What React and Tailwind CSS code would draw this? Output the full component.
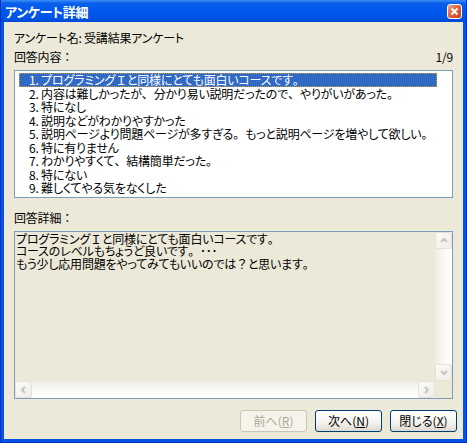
import React from 'react';

const items = [
    'プログラミングＩと同様にとても面白いコースです。',
    '内容は難しかったが、分かり易い説明だったので、やりがいがあった。',
    '特になし',
    '説明などがわかりやすかった',
    '説明ページより問題ページが多すぎる。もっと説明ページを増やして欲しい。',
    '特に有りません',
    'わかりやすくて、結構簡単だった。',
    '特にない',
    '難しくてやる気をなくした',
];

const detailLines = [
    'プログラミングＩと同様にとても面白いコースです。',
    'コースのレベルもちょうど良いです。･･･',
    'もう少し応用問題をやってみてもいいのでは？と思います。',
];

// 全角の句読点は詰めずに表示する
function Jp({ text }) {
    const parts = text.split(/([、。：？Ｉ])/);
    return parts.map((p, i) =>
        /^[、。：？Ｉ]$/.test(p) ? (
            <span key={i} className="[font-feature-settings:normal]">{p}</span>
        ) : (
            p
        )
    );
}

function Arrow({ dir }) {
    const paths = {
        up: 'M2 6 L5 3 L8 6',
        down: 'M2 3 L5 6 L8 3',
        left: 'M6 2 L3 5 L6 8',
        right: 'M3 2 L6 5 L3 8',
    };
    return (
        <svg width="10" height="10" viewBox="0 0 10 10">
            <path d={paths[dir]} fill="none" stroke="#c6c5bd" strokeWidth="2" />
        </svg>
    );
}

function ScrollButton({ dir }) {
    return (
        <div className="w-[17px] h-[17px] shrink-0 rounded-[2px] border border-[#e4e2da] bg-[linear-gradient(135deg,#fbfbf8,#eeede6)] flex items-center justify-center">
            <Arrow dir={dir} />
        </div>
    );
}

function XpButton({ label, mnemonic, disabled }) {
    return (
        <button
            disabled={disabled}
            className={`w-[67px] h-[22px] rounded-[3px] border text-[12px] leading-none flex items-center justify-center ${
                disabled
                    ? 'border-[#c9c7ba] bg-[#f5f4ea] text-[#aca899]'
                    : 'border-[#003c74] bg-[linear-gradient(to_bottom,#ffffff_0%,#f4f3ee_60%,#dcd9cd_100%)] text-black'
            }`}
        >
            {label}(<span className="underline">{mnemonic}</span>)
        </button>
    );
}

export default function App() {
    return (
        <div className="w-[467px] h-[443px] flex flex-col bg-[#0055e5] border-x border-b border-[#0030c0] font-['Noto_Sans_CJK_JP',sans-serif] [font-feature-settings:'palt'] text-black">
            {/* タイトルバー */}
            <div className="h-[22px] shrink-0 flex items-center justify-between pl-[4px] pr-[4px] bg-[linear-gradient(to_bottom,#3d8ef8_0%,#0a60ea_14%,#0058ee_45%,#0055e6_80%,#0048d8_100%)]">
                <span className="text-white font-bold text-[13px] leading-none tracking-[-0.3px]">アンケート詳細</span>
                <div className="w-[15px] h-[15px] rounded-[3px] border border-white bg-[linear-gradient(135deg,#f0a084,#e0603a_50%,#c8401c)] flex items-center justify-center">
                    <svg width="9" height="9" viewBox="0 0 9 9">
                        <path d="M1.5 1.5 L7.5 7.5 M7.5 1.5 L1.5 7.5" stroke="white" strokeWidth="2" />
                    </svg>
                </div>
            </div>

            {/* 本体 */}
            <div className="flex-1 mx-[3px] mb-[3px] bg-[#ece9d8] flex flex-col px-[10px] pt-[9px] pb-[7px] text-[12px] tracking-[-0.2px]">
                <div className="h-[14px] leading-[14px]">アンケート名: 受講結果アンケート</div>

                <div className="h-[14px] leading-[14px] mt-[5px] flex justify-between">
                    <span><Jp text="回答内容：" /></span>
                    <span>1/9</span>
                </div>

                <div className="mt-[6px] h-[128px] border border-[#7f9db9] bg-white overflow-hidden">
                    <div className="inline-flex flex-col ml-[4px] pt-[0.5px]">
                        {items.map((text, i) => (
                            <div
                                key={i}
                                className={`h-[13.5px] leading-[13.5px] pl-[10px] pr-[4px] whitespace-nowrap ${
                                    i === 0
                                        ? 'bg-[#316ac5] text-white outline-1 outline-dotted outline-offset-[-1px] outline-[#cf9b3d]'
                                        : ''
                                }`}
                            >
                                {i + 1}. <Jp text={text} />
                            </div>
                        ))}
                    </div>
                </div>

                <div className="h-[14px] leading-[14px] mt-[13px]"><Jp text="回答詳細：" /></div>

                <div className="mt-[6px] h-[168px] border border-[#7f9db9] bg-[#ece9d8] flex flex-col">
                    <div className="flex-1 flex min-h-0">
                        <div className="flex-1 pl-[1px] pt-[1px] leading-[12.3px]">
                            {detailLines.map((line, i) => (
                                <div key={i} className="whitespace-nowrap"><Jp text={line} /></div>
                            ))}
                        </div>
                        <div className="w-[17px] flex flex-col bg-[linear-gradient(to_right,#eeede5,#fdfdfa_70%,#ffffff)]">
                            <ScrollButton dir="up" />
                            <div className="flex-1" />
                            <ScrollButton dir="down" />
                        </div>
                    </div>
                    <div className="h-[17px] flex">
                        <div className="flex-1 flex bg-[linear-gradient(to_bottom,#eeede5,#fdfdfa_70%,#ffffff)]">
                            <ScrollButton dir="left" />
                            <div className="flex-1" />
                            <ScrollButton dir="right" />
                        </div>
                        <div className="w-[17px] bg-[#ece9d8]" />
                    </div>
                </div>

                <div className="mt-[11px] flex justify-end gap-[8px] -mr-[4px] tracking-normal">
                    <XpButton label="前へ" mnemonic="R" disabled />
                    <XpButton label="次へ" mnemonic="N" />
                    <XpButton label="閉じる" mnemonic="X" />
                </div>
            </div>
        </div>
    );
}
